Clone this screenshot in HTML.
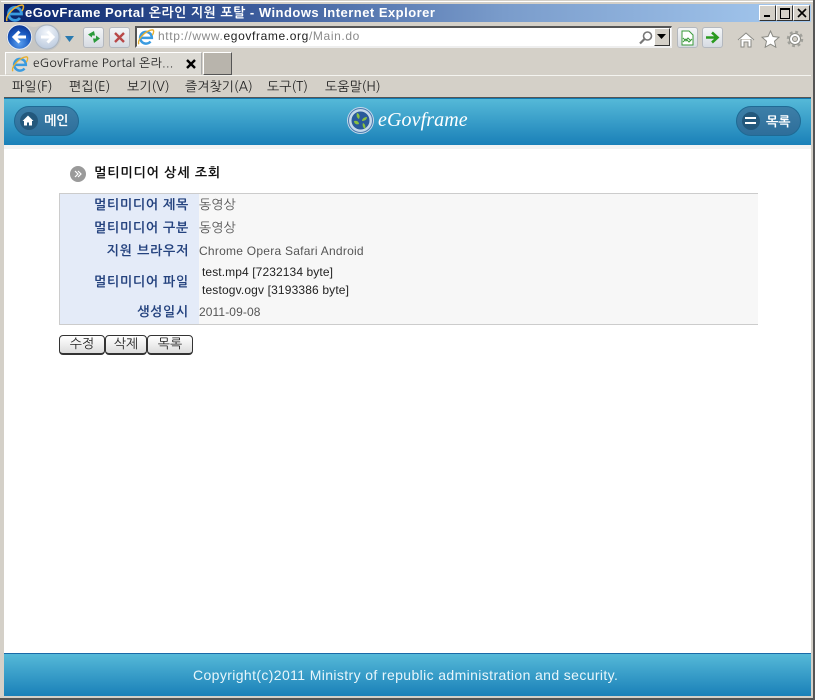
<!DOCTYPE html>
<html><head><meta charset="utf-8">
<style>
html,body{margin:0;padding:0;width:815px;height:700px;overflow:hidden;background:#d4d0c8}
body{position:relative;font-family:"Liberation Sans","Noto Sans CJK KR",sans-serif;font-size:12px;color:#222}
.a{position:absolute;white-space:nowrap}
.ko{font-family:"NanumGothic","Noto Sans CJK KR",sans-serif}
svg{position:absolute;display:block}
.bar{background:linear-gradient(#55b9d8,#1a80b8)}
.wb{position:absolute;top:5px;width:15px;height:14px;background:#d4d0c8;border:1px solid;border-color:#fff #333 #333 #fff;box-sizing:content-box}
.tb{position:absolute;top:27px;height:19px;width:19px;border:1px solid #b4b8be;border-radius:3px;background:linear-gradient(#f4f6f8,#d6dbe2)}
.menu{top:79px;font-size:13px;line-height:16px;color:#222}
.lb{position:absolute;left:0;width:130px;text-align:right;font-weight:bold;color:#24427e;font-size:13px;line-height:16px;letter-spacing:.75px}
.v{position:absolute;left:140px;color:#555;font-size:12px;letter-spacing:.25px}
.btn{position:absolute;top:335px;height:17px;border:1px solid #333;border-right-width:1px;border-bottom-width:2px;border-radius:4px;background:linear-gradient(#fff,#dcdcdc);text-align:center;font-size:13px;line-height:16px;color:#222;box-sizing:content-box}
.pill{position:absolute;top:106px;height:28px;border:1px solid #1f6a94;border-radius:15px;background:linear-gradient(#3d7fa8,#2e6e9a)}
.pc{position:absolute;left:5px;top:5px;width:18px;height:18px;border-radius:9px;background:#23587c}
</style></head><body>

<div class="a" style="left:1px;top:1px;width:812px;height:1px;background:#fff"></div>
<div class="a" style="left:813px;top:0;width:2px;height:700px;background:#555"></div>
<div class="a" style="left:0;top:698px;width:815px;height:2px;background:#555"></div>

<!-- title bar -->
<div class="a" style="left:4px;top:4px;width:807px;height:18px;background:linear-gradient(90deg,#0a246a 0%,#3a5a9a 30%,#7a9ccb 62%,#a6caf0 100%)"></div>
<svg style="left:5px;top:3px" width="20" height="20" viewBox="0 0 20 20"><path d="M5 11h11.500a6.500 6.500 0 1 0-1.500 4" fill="none" stroke="#3a9be0" stroke-width="2.800"/><path d="M2 18C0 13 9 3 17 2c2 0 2 3 0 6" fill="none" stroke="#e8b030" stroke-width="1.500"/></svg>
<div class="a" style="left:25px;top:4px;font-size:13px;line-height:18px;font-weight:bold;color:#fff;letter-spacing:.48px;font-family:'Liberation Sans','NanumGothic',sans-serif">eGovFrame Portal 온라인 지원 포탈 - Windows Internet Explorer</div>
<div class="wb" style="left:759px"><div style="position:absolute;left:4px;top:9px;width:6px;height:2px;background:#000"></div></div>
<div class="wb" style="left:776px"><div style="position:absolute;left:3px;top:2px;width:8px;height:8px;border:1px solid #000;border-top-width:2px"></div></div>
<div class="wb" style="left:793px"><svg style="left:3px;top:2px" width="10" height="10"><path d="M1 1l8 8M9 1l-8 8" stroke="#000" stroke-width="1.600"/></svg></div>

<!-- nav -->
<svg style="left:5px;top:22px" width="58" height="30" viewBox="0 0 58 30">
<defs><radialGradient id="bl" cx=".5" cy=".75" r=".8"><stop offset="0" stop-color="#5aa0f0"/><stop offset=".55" stop-color="#1a5ac0"/><stop offset="1" stop-color="#0a2e88"/></radialGradient>
<radialGradient id="gr" cx=".5" cy=".3" r=".8"><stop offset="0" stop-color="#f2f6fb"/><stop offset="1" stop-color="#b4c4da"/></radialGradient></defs>
<path d="M15 2c6 0 9 3 14 3s7-3 13-3 14 6 14 13-7 14-14 14H15C8 29 1 22 1 15S8 2 15 2z" fill="#c6c6c4"/>
<circle cx="14.500" cy="15" r="12.200" fill="url(#bl)" stroke="#e8ecf0"/>
<circle cx="42" cy="15" r="12" fill="url(#gr)" stroke="#aab4c0"/>
<path d="M21 15H10M14.500 9.500L9 15l5.500 5.500" fill="none" stroke="#fff" stroke-width="3"/>
<path d="M36 15h11M42.500 9.500L48 15l-5.500 5.500" fill="none" stroke="#fff" stroke-width="3"/></svg>
<svg style="left:65px;top:36px" width="10" height="6"><path d="M0 0h9L4.500 6z" fill="#2a7ab0"/></svg>
<div class="tb" style="left:83px"></div>
<svg style="left:86px;top:30px" width="16" height="15" viewBox="0 0 16 15"><path d="M8 1L2 4.500l4 3V5.500h3zM8 13l6-4.500-4-3v3H7z" fill="#2a9a3a"/></svg>
<div class="tb" style="left:109px"></div>
<svg style="left:112px;top:30px" width="15" height="15"><path d="M3 3l9 9M12 3l-9 9" stroke="#b84848" stroke-width="2.400"/></svg>

<div class="a" style="left:135px;top:26px;width:534px;height:18px;background:#fff;border:solid;border-color:#555 #eee #eee #555;border-width:2px 1px 2px 2px"></div>
<svg style="left:137px;top:28px" width="18" height="18" viewBox="0 0 20 20"><path d="M5 11h11.500a6.500 6.500 0 1 0-1.500 4" fill="none" stroke="#3a9be0" stroke-width="2.800"/><path d="M2 18C0 13 9 3 17 2c2 0 2 3 0 6" fill="none" stroke="#e8b030" stroke-width="1.500"/></svg>
<div class="a" style="left:158px;top:28px;font-size:12px;line-height:16px;letter-spacing:.62px;color:#8a8a8a">http://www.<span style="color:#222">egovframe.org</span>/Main.do</div>
<svg style="left:638px;top:30px" width="16" height="15"><circle cx="9.500" cy="6" r="4" fill="none" stroke="#777" stroke-width="1.600"/><path d="M6.500 9L2 13.500" stroke="#777" stroke-width="2.200"/></svg>
<div class="a" style="left:654px;top:28px;width:14px;height:16px;background:#d4d0c8;border:1px solid;border-color:#fff #333 #333 #fff"></div>
<svg style="left:657px;top:34px" width="9" height="5"><path d="M0 0h9L4.500 5z" fill="#000"/></svg>
<div class="tb" style="left:677px"></div>
<svg style="left:681px;top:30px" width="13" height="16"><path d="M1 1h7l4 4v10H1z" fill="#fff" stroke="#3a9a3a"/><path d="M2 8l3 3 2-3 3 3M2 12l3-3 3 3 3-3" stroke="#3a9a3a" fill="none"/></svg>
<div class="tb" style="left:702px"></div>
<svg style="left:705px;top:30px" width="15" height="15"><path d="M1 7.500h11M7 2.500l5.500 5-5.500 5" fill="none" stroke="#2a9a20" stroke-width="2.600"/></svg>

<svg style="left:737px;top:31px" width="18" height="17" viewBox="0 0 18 17"><path d="M1 9l8-7 8 7M4 8v8h3v-5h4v5h3V8" fill="#fff" stroke="#8a8a84"/></svg>
<svg style="left:761px;top:30px" width="19" height="18" viewBox="0 0 19 18"><path d="M9.500 1l2.500 5.500 6 .7-4.500 4 1.300 6-5.300-3-5.300 3 1.300-6-4.500-4 6-.7z" fill="#fff" stroke="#8a8a84"/></svg>
<svg style="left:786px;top:30px" width="18" height="18" viewBox="0 0 18 18"><circle cx="9" cy="9" r="5.500" fill="#fff" stroke="#8a8a84"/><circle cx="9" cy="9" r="7" fill="none" stroke="#a0a09a" stroke-width="2.500" stroke-dasharray="2.800 2.700"/><circle cx="9" cy="9" r="2.500" fill="#d4d0c8" stroke="#8a8a84"/></svg>

<!-- tabs -->
<div class="a" style="left:5px;top:52px;width:197px;height:23px;background:#dcdad4;border:1px solid;border-color:#fff #aaa #d4d0c8 #fff;box-sizing:border-box"></div>
<svg style="left:11px;top:55px" width="18" height="18" viewBox="0 0 20 20"><path d="M5 11h11.500a6.500 6.500 0 1 0-1.500 4" fill="none" stroke="#3a9be0" stroke-width="2.800"/><path d="M2 18C0 13 9 3 17 2c2 0 2 3 0 6" fill="none" stroke="#e8b030" stroke-width="1.500"/></svg>
<div class="a ko" style="left:33px;top:55px;font-size:12px;line-height:16px;letter-spacing:.2px;color:#222">eGovFrame Portal 온라...</div>
<svg style="left:186px;top:59px" width="10" height="10"><path d="M1 1l8 8M9 1l-8 8" stroke="#000" stroke-width="2.400"/></svg>
<div class="a" style="left:203px;top:52px;width:29px;height:23px;box-sizing:border-box;background:#b8b4ac;border:1px solid;border-color:#fff #555 #555 #fff"></div>
<div class="a" style="left:0;top:75px;width:811px;height:1px;background:#f4f4f0"></div>

<!-- menu -->
<div class="a ko menu" style="left:12px">파일(F)</div>
<div class="a ko menu" style="left:69px">편집(E)</div>
<div class="a ko menu" style="left:127px">보기(V)</div>
<div class="a ko menu" style="left:185px">즐겨찾기(A)</div>
<div class="a ko menu" style="left:267px">도구(T)</div>
<div class="a ko menu" style="left:325px">도움말(H)</div>
<div class="a" style="left:4px;top:97px;width:807px;height:1px;background:#555"></div>

<!-- page -->
<div class="a" style="left:4px;top:98px;width:807px;height:555px;background:#fff"></div>
<div class="a bar" style="left:4px;top:98px;width:807px;height:47px;border-top:1px solid #0f78b0;box-sizing:border-box"></div>
<div class="a" style="left:4px;top:145px;width:807px;height:4px;background:#f2f3f3"></div>

<div class="pill" style="left:14px;width:63px"><div class="pc"></div></div>
<svg style="left:21px;top:114px" width="14" height="13"><path d="M7 1.500L1.500 7H3v4.500h3V8.500h2v3h3V7h1.500z" fill="#fff"/></svg>
<div class="a ko" style="left:44px;top:113px;font-size:13px;line-height:16px;font-weight:bold;color:#fff">메인</div>

<svg style="left:346px;top:106px" width="29" height="29" viewBox="0 0 29 29"><circle cx="14.500" cy="14.500" r="13.500" fill="#c4d8ea"/><circle cx="14.500" cy="14.500" r="12" fill="none" stroke="#4a7ab0"/><circle cx="14.500" cy="14.500" r="9" fill="#2a5a9a"/><path d="M11 7c3 1 3 4 2 6-2-1-3-3-2-6zM21 11c0 3-3 4-5 4 0-2 2-4 5-4zM8 15c3-1 5 1 5 3-2 1-5 0-5-3zM17 17c2 1 3 3 2 6-2-1-3-4-2-6z" fill="#8ac040"/></svg>
<div class="a" style="left:378px;top:108px;font-family:'Liberation Serif',serif;font-style:italic;font-size:20px;line-height:24px;color:#fff;letter-spacing:.1px">eGovframe</div>

<div class="pill" style="left:736px;width:63px"><div class="pc"></div></div>
<div class="a" style="left:745px;top:117px;width:11px;height:2px;background:#fff"></div>
<div class="a" style="left:745px;top:122px;width:11px;height:2px;background:#fff"></div>
<div class="a ko" style="left:766px;top:114px;font-size:13px;line-height:16px;font-weight:bold;color:#fff">목록</div>

<!-- heading -->
<div class="a" style="left:70px;top:166px;width:16px;height:16px;border-radius:8px;background:#9a9a9a"></div>
<svg style="left:74px;top:170px" width="8" height="8"><path d="M1 1l3 3-3 3M4 1l3 3-3 3" fill="none" stroke="#fff" stroke-width="1.200"/></svg>
<div class="a ko" style="left:94px;top:165px;font-size:13px;line-height:16px;font-weight:bold;color:#111;letter-spacing:.9px">멀티미디어 상세 조회</div>

<!-- table -->
<div class="a" style="left:59px;top:193px;width:699px;height:132px;background:#f7f7f7;border-top:1px solid #ccc;border-bottom:1px solid #ccc;box-sizing:border-box">
<div style="position:absolute;left:0;top:0;width:140px;height:130px;background:#e4ebf8;border-left:1px solid #ccc;box-sizing:border-box"></div>
<div class="lb ko" style="top:3px">멀티미디어 제목</div><div class="v ko" style="top:3px;font-size:13px;line-height:16px;letter-spacing:0">동영상</div>
<div class="lb ko" style="top:26px">멀티미디어 구분</div><div class="v ko" style="top:26px;font-size:13px;line-height:16px;letter-spacing:0">동영상</div>
<div class="lb ko" style="top:49px">지원 브라우저</div><div class="v" style="top:50px">Chrome Opera Safari Android</div>
<div class="lb ko" style="top:80px">멀티미디어 파일</div>
<div class="v" style="left:143px;top:71px;color:#222;letter-spacing:.1px">test.mp4 [7232134 byte]</div>
<div class="v" style="left:143px;top:89px;color:#222;letter-spacing:.15px">testogv.ogv [3193386 byte]</div>
<div class="lb ko" style="top:110px">생성일시</div><div class="v" style="top:111px;letter-spacing:.1px">2011-09-08</div>
</div>

<div class="btn ko" style="left:59px;width:44px">수정</div>
<div class="btn ko" style="left:105px;width:40px">삭제</div>
<div class="btn ko" style="left:147px;width:44px">목록</div>

<!-- footer -->
<div class="a bar" style="left:4px;top:653px;width:807px;height:43px;border-top:1px solid #1a6aa8;box-sizing:border-box"></div>
<div class="a" style="left:193px;top:666px;font-size:14px;line-height:18px;color:#e8f6fb;letter-spacing:.38px">Copyright(c)2011 Ministry of republic administration and security.</div>

</body></html>
